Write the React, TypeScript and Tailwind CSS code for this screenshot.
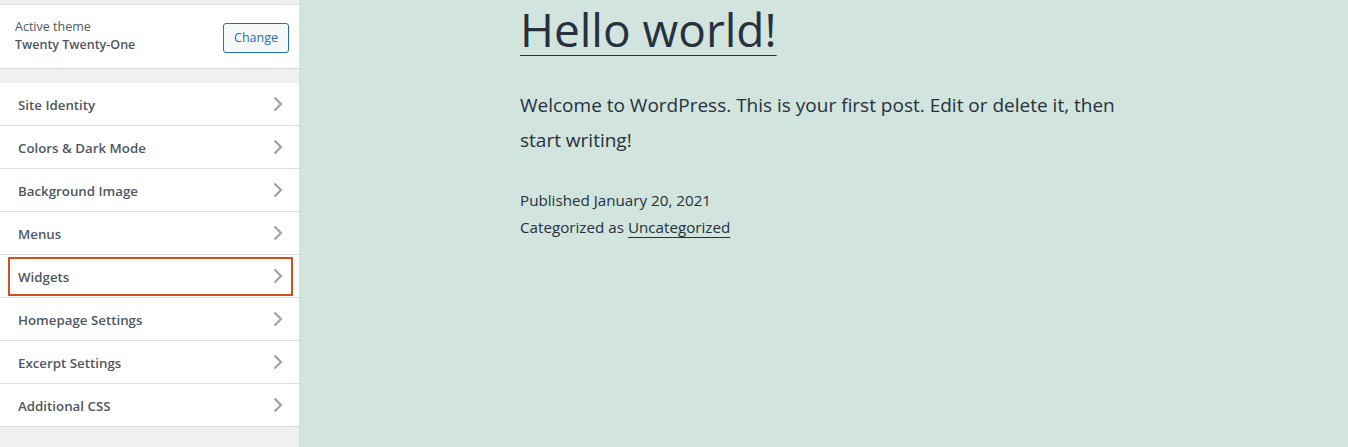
import React from "react";

const items = [
  "Site Identity",
  "Colors & Dark Mode",
  "Background Image",
  "Menus",
  "Widgets",
  "Homepage Settings",
  "Excerpt Settings",
  "Additional CSS",
];

function Chevron() {
  return (
    <svg width="10" height="16" viewBox="0 0 10 16" className="shrink-0">
      <polyline points="1.5,1.5 8,8 1.5,14.5" fill="none" stroke="#9ea3a8" strokeWidth="2.2" />
    </svg>
  );
}

export default function App() {
  return (
    <div
      className="flex w-[1348px] h-[447px] overflow-hidden"
      style={{ fontFamily: '"Open Sans", "Noto Sans", sans-serif' }}
    >
      <div className="w-[300px] shrink-0 bg-[#f0f0f1] border-r border-[#dcdcde] flex flex-col">
        <div className="mt-[4px] h-[65px] bg-white border-y border-[#dcdcde] flex items-start justify-between pl-[15px] pr-[10px]">
          <div className="flex flex-col pt-[13px]">
            <span className="text-[12.5px] leading-[18px] text-[#50575e]">Active theme</span>
            <span className="text-[12.5px] leading-[18px] font-semibold text-[#50575e]">Twenty Twenty-One</span>
          </div>
          <button className="mt-[18px] h-[30px] px-[10px] rounded-[3px] border border-[#2271b1] bg-[#f6f7f7] text-[12.5px] text-[#2271b1]">
            Change
          </button>
        </div>
        <div className="h-[14px]" />
        <div className="flex flex-col">
          {items.map((t) => (
            <div
              key={t}
              className="h-[43px] bg-white border-b border-[#dcdcde] flex items-center pl-[8px] pr-[6px]"
            >
              <div
                className={
                  "flex-1 h-[39px] flex items-center justify-between pl-[8px] pr-[8px] " +
                  (t === "Widgets" ? "border-2 border-[#d54e21]" : "border-2 border-transparent")
                }
              >
                <span className="pt-[3px] text-[13.3px] font-semibold text-[#50575e]">{t}</span>
                <Chevron />
              </div>
            </div>
          ))}
        </div>
      </div>
      <div className="flex-1 bg-[#d1e4dd] pl-[220px] text-[#28303d]">
        <h1 className="pt-[1px] text-[46px] leading-[56px] font-normal underline decoration-1 underline-offset-[8px]">
          Hello world!
        </h1>
        <p className="mt-[31px] text-[19px] leading-[35px] w-[620px]">
          Welcome to WordPress. This is your first post. Edit or delete it, then start writing!
        </p>
        <div className="mt-[29px] text-[15.2px] leading-[27px]">
          <div>Published January 20, 2021</div>
          <div>
            Categorized as <span className="underline underline-offset-[4px]">Uncategorized</span>
          </div>
        </div>
      </div>
    </div>
  );
}
